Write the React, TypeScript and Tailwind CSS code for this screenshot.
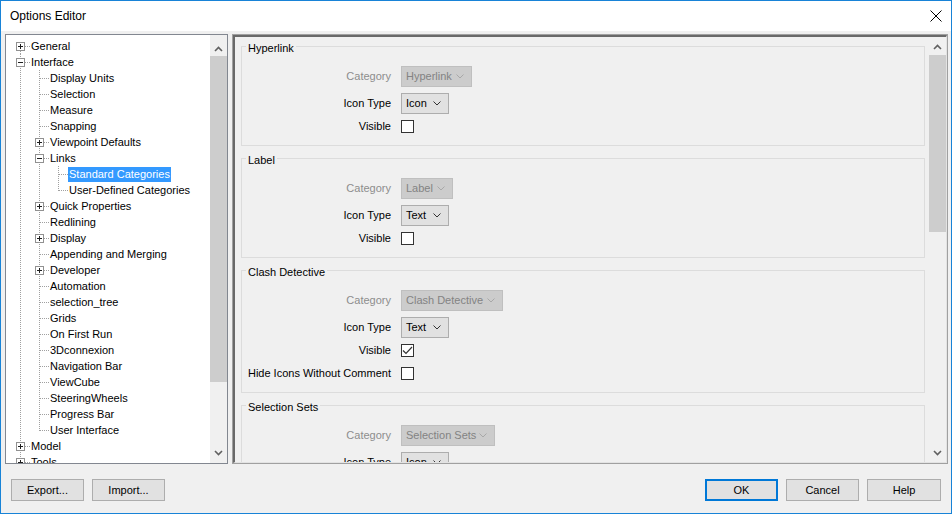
type TreeNode = {
  label: string;
  depth: number;
  box?: "+" | "-";
  first?: boolean;
  last?: boolean;
  selected?: boolean;
};

const tree: TreeNode[] = [
  { label: "General", depth: 0, box: "+", first: true },
  { label: "Interface", depth: 0, box: "-" },
  { label: "Display Units", depth: 1 },
  { label: "Selection", depth: 1 },
  { label: "Measure", depth: 1 },
  { label: "Snapping", depth: 1 },
  { label: "Viewpoint Defaults", depth: 1, box: "+" },
  { label: "Links", depth: 1, box: "-" },
  { label: "Standard Categories", depth: 2, selected: true },
  { label: "User-Defined Categories", depth: 2, last: true },
  { label: "Quick Properties", depth: 1, box: "+" },
  { label: "Redlining", depth: 1 },
  { label: "Display", depth: 1, box: "+" },
  { label: "Appending and Merging", depth: 1 },
  { label: "Developer", depth: 1, box: "+" },
  { label: "Automation", depth: 1 },
  { label: "selection_tree", depth: 1 },
  { label: "Grids", depth: 1 },
  { label: "On First Run", depth: 1 },
  { label: "3Dconnexion", depth: 1 },
  { label: "Navigation Bar", depth: 1 },
  { label: "ViewCube", depth: 1 },
  { label: "SteeringWheels", depth: 1 },
  { label: "Progress Bar", depth: 1 },
  { label: "User Interface", depth: 1, last: true },
  { label: "Model", depth: 0, box: "+" },
  { label: "Tools", depth: 0, box: "+" },
];

const font = "font-['Liberation_Sans',Arial,sans-serif]";

// dotted connector lines + expander box for one tree row
function Connector({ node }: { node: TreeNode }) {
  const w = 19 * (node.depth + 1);
  const c = 19 * node.depth + 9.5;
  const my = 8.5;
  const dots = { stroke: "#a0a0a0", strokeDasharray: "1 1", shapeRendering: "crispEdges" as const };
  return (
    <svg width={w} height={16} className="shrink-0">
      {Array.from({ length: node.depth }).map((_, k) => (
        <line key={k} x1={19 * k + 9.5} y1={0} x2={19 * k + 9.5} y2={16} {...dots} />
      ))}
      <line x1={c} y1={node.first ? my : 0} x2={c} y2={node.last ? my : 16} {...dots} />
      <line x1={c + 0.5} y1={my} x2={w} y2={my} {...dots} />
      {node.box && (
        <g shapeRendering="crispEdges">
          <rect x={c - 4} y={my - 4} width={8} height={8} fill="#fff" stroke="#919191" />
          <line x1={c - 2.5} y1={my} x2={c + 2.5} y2={my} stroke="#1e1e1e" />
          {node.box === "+" && <line x1={c} y1={my - 2.5} x2={c} y2={my + 2.5} stroke="#1e1e1e" />}
        </g>
      )}
    </svg>
  );
}

function Chevron({ up, color = "#606060" }: { up?: boolean; color?: string }) {
  return (
    <svg width={9} height={6}>
      <polyline
        points={up ? "1,5 4.5,1.5 8,5" : "1,1 4.5,4.5 8,1"}
        fill="none"
        stroke={color}
        strokeWidth={1.6}
      />
    </svg>
  );
}

function ComboArrow({ disabled }: { disabled?: boolean }) {
  return (
    <svg width={8} height={5}>
      <polyline points="0.5,0.5 4,4 7.5,0.5" fill="none" stroke={disabled ? "#a8a8a8" : "#333"} strokeWidth={1} />
    </svg>
  );
}

function Combo({ value, width, disabled }: { value: string; width: string; disabled?: boolean }) {
  return (
    <div
      className={`${width} h-[21px] flex items-center justify-between pl-[4px] pr-[7px] border ${
        disabled ? "bg-[#cccccc] border-[#bfbfbf] text-[#838383]" : "bg-[#e1e1e1] border-[#adadad] text-black"
      }`}
    >
      <span>{value}</span>
      <ComboArrow disabled={disabled} />
    </div>
  );
}

function Check({ checked }: { checked?: boolean }) {
  return (
    <div className="w-[13px] h-[13px] border border-[#333] bg-white flex items-center justify-center">
      {checked && (
        <svg width={11} height={11}>
          <polyline points="1,5.5 4,8.5 10,2" fill="none" stroke="#333" strokeWidth={1.2} />
        </svg>
      )}
    </div>
  );
}

function Row({ label, disabled, children, className = "" }: { label: string; disabled?: boolean; children: React.ReactNode; className?: string }) {
  return (
    <div className={`flex items-center h-[23px] gap-[10px] ${className}`}>
      <span className={`w-[149px] text-right whitespace-nowrap ${disabled ? "text-[#8d8d8d]" : "text-black"}`}>{label}</span>
      {children}
    </div>
  );
}

function Group({
  title,
  combo,
  comboWidth,
  iconType,
  visible,
  hide,
  className = "",
}: {
  title: string;
  combo: string;
  comboWidth: string;
  iconType: string;
  visible?: boolean;
  hide?: boolean;
  className?: string;
}) {
  return (
    <fieldset className={`border border-[#dcdcdc] pt-[12px] pb-[7px] ${className}`}>
      <legend className="ml-[4px] px-[2px] h-[13px] leading-[13px]">
        <span className="relative top-[2px]">{title}</span>
      </legend>
      <Row label="Category" disabled className="mb-[4px]">
        <Combo value={combo} width={comboWidth} disabled />
      </Row>
      <Row label="Icon Type">
        <Combo value={iconType} width="w-[48px]" />
      </Row>
      <Row label="Visible">
        <Check checked={visible} />
      </Row>
      {hide && (
        <Row label="Hide Icons Without Comment">
          <Check />
        </Row>
      )}
    </fieldset>
  );
}

function Button({ label, primary, className = "" }: { label: string; primary?: boolean; className?: string }) {
  return (
    <div
      className={`w-[73px] h-[22px] bg-[#e1e1e1] flex items-center justify-center text-black ${
        primary ? "border-2 border-[#0078d7]" : "border border-[#adadad]"
      } ${className}`}
    >
      {label}
    </div>
  );
}

export default function App() {
  return (
    <div className={`w-[952px] h-[514px] border border-[#1883d7] bg-[#f0f0f0] flex flex-col text-[11px] ${font}`}>
      {/* title bar */}
      <div className="h-[30px] bg-white flex items-center justify-between pl-[9px] pr-[9px] shrink-0">
        <span className="text-[12px] text-black">Options Editor</span>
        <svg width={12} height={12}>
          <line x1={0.5} y1={0.5} x2={11.5} y2={11.5} stroke="#000" strokeWidth={1} />
          <line x1={11.5} y1={0.5} x2={0.5} y2={11.5} stroke="#000" strokeWidth={1} />
        </svg>
      </div>

      {/* panels */}
      <div className="flex gap-[4px] pl-[4px] pt-[3px] h-[433px] shrink-0">
        {/* tree */}
        <div className="w-[223px] h-[430px] border border-[#828790] bg-white flex">
          <div className="flex-1 overflow-hidden pt-[3px] pl-[5px]">
            {tree.map((n) => (
              <div key={n.label} className="flex h-[16px] items-center">
                <Connector node={n} />
                <span
                  className={`px-[1px] leading-[15px] whitespace-nowrap ${
                    n.selected ? "bg-[#3399ff] text-white" : "text-black"
                  }`}
                >
                  {n.label}
                </span>
              </div>
            ))}
          </div>
          <div className="w-[17px] bg-[#f0f0f0] flex flex-col">
            <div className="h-[21px] flex justify-center pt-[11px]">
              <Chevron up />
            </div>
            <div className="h-[326px] bg-[#cdcdcd]" />
            <div className="flex-1" />
            <div className="h-[21px] flex items-center justify-center">
              <Chevron />
            </div>
          </div>
        </div>

        {/* properties */}
        <div className="w-[716px] h-[430px] border border-[#a0a0a0]">
          <div className="h-full border-l-2 border-t-2 border-r border-b border-l-[#696969] border-t-[#696969] border-r-[#e3e3e3] border-b-[#e3e3e3] flex">
            <div className="flex-1 overflow-hidden pl-[6px] pr-[4px] pt-[3px]">
              <Group title="Hyperlink" combo="Hyperlink" comboWidth="w-[71px]" iconType="Icon" />
              <Group title="Label" combo="Label" comboWidth="w-[52px]" iconType="Text" className="mt-[6px]" />
              <Group
                title="Clash Detective"
                combo="Clash Detective"
                comboWidth="w-[102px]"
                iconType="Text"
                visible
                hide
                className="mt-[6px]"
              />
              <Group title="Selection Sets" combo="Selection Sets" comboWidth="w-[94px]" iconType="Icon" className="mt-[6px]" />
            </div>
            <div className="w-[17px] bg-[#f0f0f0] flex flex-col">
              <div className="h-[18px] flex items-center justify-center pt-[2px]">
                <Chevron up />
              </div>
              <div className="h-[177px] bg-[#cdcdcd]" />
              <div className="flex-1" />
              <div className="h-[18px] flex items-center justify-center">
                <Chevron />
              </div>
            </div>
          </div>
        </div>
      </div>

      {/* buttons */}
      <div className="flex items-start pt-[15px] pl-[10px] pr-[10px]">
        <Button label="Export..." />
        <Button label="Import..." className="ml-[8px]" />
        <div className="flex-1" />
        <Button label="OK" primary />
        <Button label="Cancel" className="ml-[8px]" />
        <Button label="Help" className="ml-[8px] w-[74px]" />
      </div>
    </div>
  );
}
